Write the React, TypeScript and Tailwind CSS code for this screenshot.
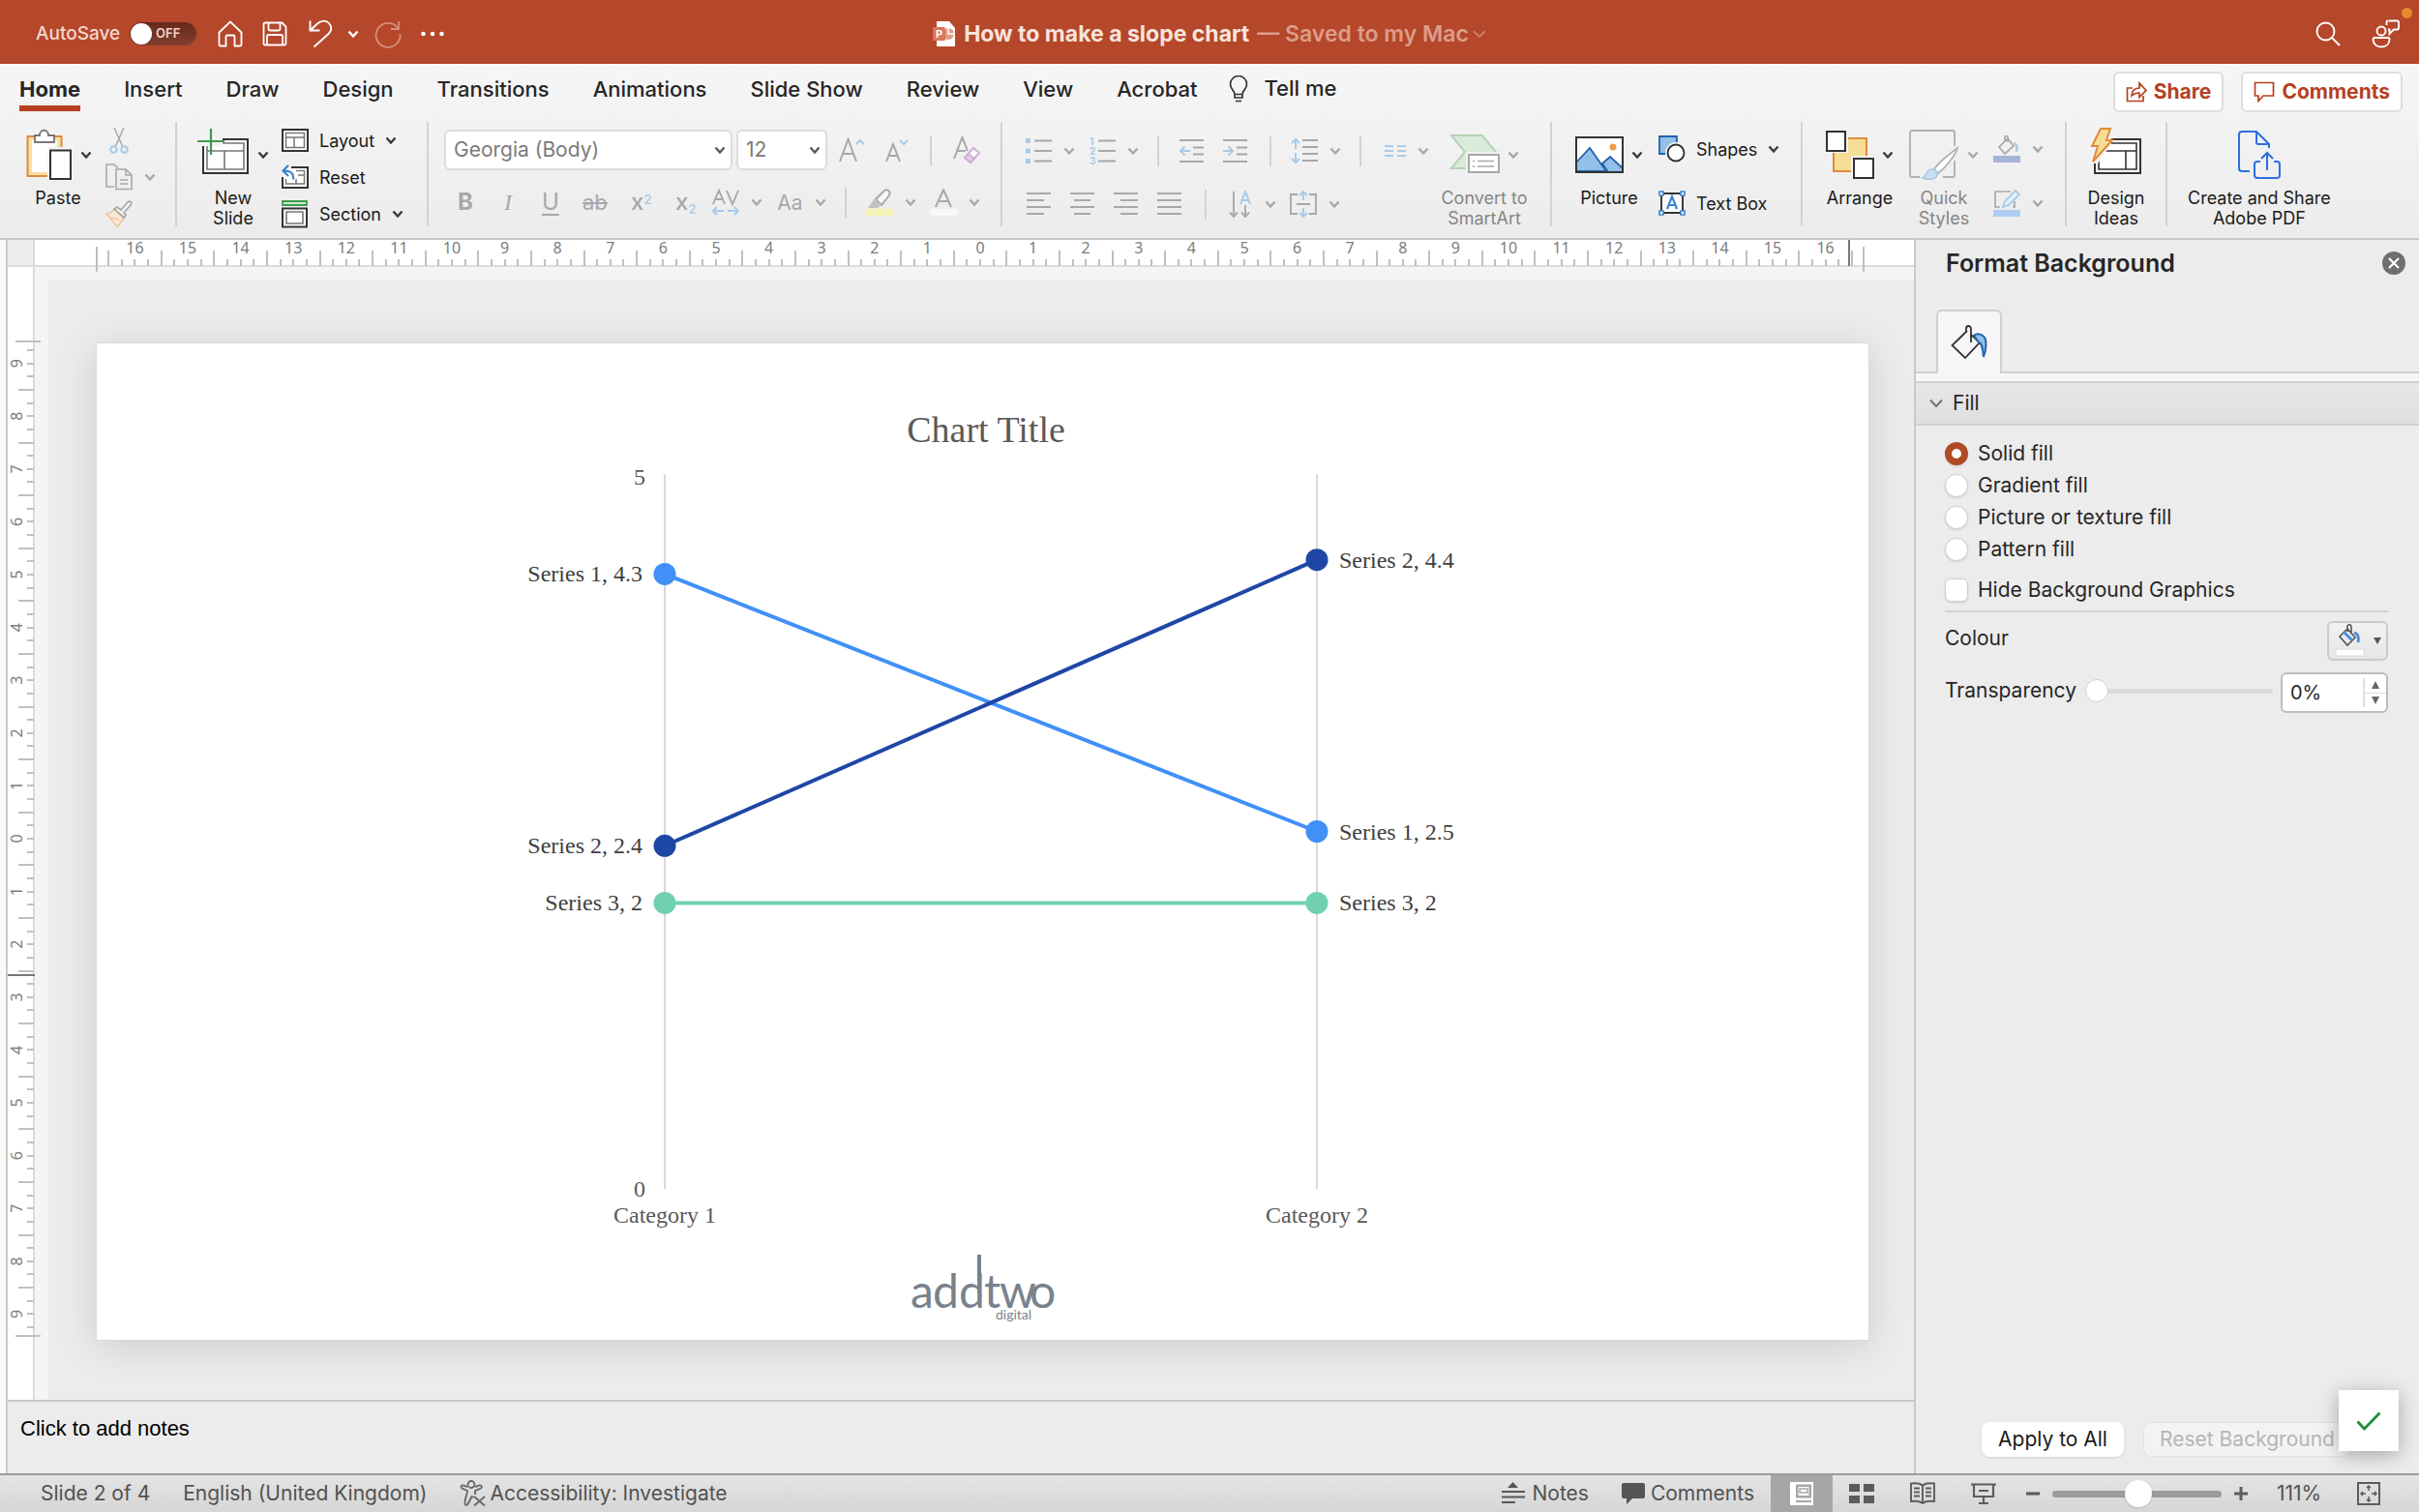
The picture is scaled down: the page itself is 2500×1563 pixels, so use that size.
import React, { useState } from 'react';
import clsx from 'clsx';

type ChildrenProps = { children?: React.ReactNode };

type IconProps = ChildrenProps & {
  w: number;
  h: number;
  className?: string;
};

const GREY = '#a8a8a8';
const SOFT_BLUE = '#a9cbe8';
const DARK = '#3b3b3b';

const Icon: React.FC<IconProps> = ({ w, h, className, children }) => (
  <svg
    width={w}
    height={h}
    viewBox={`0 0 ${w} ${h}`}
    fill="none"
    className={clsx('shrink-0', className)}
    aria-hidden="true"
  >
    {children}
  </svg>
);

const Chevron = ({ color = DARK }: { color?: string }) => (
  <Icon w={12} h={8}>
    <path d="M1.5 1.5 6 6.5l4.5-5" stroke={color} strokeWidth="2.4" />
  </Icon>
);

/* ---------- title bar ---------- */

const TitleBar = () => {
  const [autoSave, setAutoSave] = useState(false);

  return (
    <header className="grid h-[66px] grid-cols-[1fr_auto_1fr] items-center bg-[#b5472a] pt-1 text-white">
      <div className="flex items-center pl-[37px]">
        <label
          htmlFor="autosave"
          className="w-[97px] text-[19px] font-medium text-[#f3d8cf]"
        >
          AutoSave
        </label>
        <button
          id="autosave"
          role="switch"
          aria-checked={autoSave}
          onClick={() => setAutoSave(!autoSave)}
          className="flex h-6 w-[69px] items-center gap-1 rounded-full bg-gradient-to-b from-[#66291b] to-[#83402f] px-px text-[13px] font-semibold text-[#f0d6ce]"
        >
          <span className="size-[22px] rounded-full bg-white" />
          {autoSave ? 'ON' : 'OFF'}
        </button>
        <button aria-label="Home" className="ml-[22px]">
          <Icon w={26} h={28}>
            <path
              d="M1.5 12.5 13 1.5l11.500 11V25a1.500 1.500 0 0 1-1.500 1.500h-5.500V17a1.500 1.500 0 0 0-1.500-1.500h-6A1.500 1.500 0 0 0 8.500 17v9.500H3A1.500 1.500 0 0 1 1.500 25z"
              stroke="#fff"
              strokeWidth="1.800"
            />
          </Icon>
        </button>
        <button aria-label="Save" className="ml-5">
          <Icon w={26} h={26}>
            <path
              d="M3 1.500h17.500l4 4V23a1.500 1.500 0 0 1-1.500 1.500H3A1.500 1.500 0 0 1 1.500 23V3A1.500 1.500 0 0 1 3 1.500zM6.500 1.500V8A1.500 1.500 0 0 0 8 9.500h9A1.500 1.500 0 0 0 18.500 8V1.500M5 24.500v-9A1.500 1.500 0 0 1 6.500 14h13a1.500 1.500 0 0 1 1.500 1.500v9"
              stroke="#fff"
              strokeWidth="1.800"
            />
          </Icon>
        </button>
        <button aria-label="Undo" className="ml-[22px] flex items-center gap-[15px]">
          <Icon w={25} h={30}>
            <path
              d="M1.500 1.500v10h10M1.500 11.500 9 4.500c4-3.600 9-4 12-.500 3.500 4 2.500 8-.500 11L5.500 28.500"
              stroke="#fff"
              strokeWidth="1.900"
            />
          </Icon>
          <Chevron color="#fff" />
        </button>
        <button aria-label="Redo" className="ml-[15px]">
          <Icon w={30} h={30}>
            <path
              d="M26 2v8h-8M25.500 9.500A12.500 12.500 0 1 0 27.500 15"
              stroke="#d68f7b"
              strokeWidth="1.800"
            />
          </Icon>
        </button>
        <button aria-label="More" className="ml-[19px]">
          <Icon w={24} h={6}>
            <circle cx="2.500" cy="3" r="2.300" fill="#fff" />
            <circle cx="12" cy="3" r="2.300" fill="#fff" />
            <circle cx="21.500" cy="3" r="2.300" fill="#fff" />
          </Icon>
        </button>
      </div>

      <h1 className="flex items-center text-[23px] font-bold text-[#f8e3dc]">
        <Icon w={24} h={26} className="mr-2">
          <path d="M4 0h13l6 7v19H4z" fill="#fff" />
          <circle cx="16" cy="13" r="6" fill="#e39a86" />
          <path d="M16 6v7h7" stroke="#fff" strokeWidth="1.500" />
          <rect y="6" width="13" height="14" rx="1.500" fill="#d8775c" />
          <text x="3" y="17" fontSize="11" fontWeight="700" fill="#fff">
            P
          </text>
        </Icon>
        How to make a slope chart
        <span className="ml-2 mr-1 font-semibold text-[#dd9c89]">
          — Saved to my Mac
        </span>
        <Icon w={14} h={9}>
          <path d="m1 1 6 6 6-6" stroke="#cf8069" strokeWidth="1.800" />
        </Icon>
      </h1>

      <div className="flex items-center justify-end gap-8 pr-[19px]">
        <button aria-label="Search">
          <Icon w={26} h={26}>
            <circle cx="10.500" cy="10.500" r="9" stroke="#fff" strokeWidth="1.900" />
            <path d="m17 17 8 8" stroke="#fff" strokeWidth="1.900" />
          </Icon>
        </button>
        <button aria-label="Presence" className="relative">
          <Icon w={30} h={30}>
            <circle cx="10" cy="12" r="4.500" stroke="#fff" strokeWidth="1.900" />
            <path
              d="M3 19h14a1.500 1.500 0 0 1 1.500 1.500c0 5-3.500 8-8.500 8s-8.500-3-8.500-8A1.500 1.500 0 0 1 3 19zM17.500 1.500h9A1.500 1.500 0 0 1 28 3v6a1.500 1.500 0 0 1-1.500 1.500H23L18.500 15v-4.500H17M15.500 6V3a1.500 1.500 0 0 1 1.500-1.500"
              stroke="#fff"
              strokeWidth="1.900"
            />
          </Icon>
          <span className="absolute -right-3 -top-3 size-[11px] rounded-full bg-[#e8892f]" />
        </button>
      </div>
    </header>
  );
};

/* ---------- ribbon tabs ---------- */

const tabs = [
  'Home',
  'Insert',
  'Draw',
  'Design',
  'Transitions',
  'Animations',
  'Slide Show',
  'Review',
  'View',
  'Acrobat',
];

const TabRow = () => {
  const [active, setActive] = useState('Home');

  return (
    <div className="flex h-[60px] items-start justify-between pl-5 pr-[17px]">
      <nav className="flex items-center gap-[45px] pt-2 text-[22px] font-medium text-[#262626]">
        {tabs.map((tab) => (
          <button
            key={tab}
            onClick={() => setActive(tab)}
            className={clsx(
              'h-[41px] border-b-[6px] leading-8',
              tab === active
                ? 'border-[#b5411f] font-bold'
                : 'border-transparent'
            )}
          >
            {tab}
          </button>
        ))}
        <button className="-ml-3 flex h-[41px] items-center gap-4 border-b-[6px] border-transparent">
          <Icon w={20} h={28}>
            <path
              d="M6 19.500c0-4-4.500-5-4.500-10.500a8.500 8.500 0 0 1 17 0c0 5.500-4.500 6.500-4.500 10.500zM6 19.500v3.500h8v-3.500M7 26.500h6"
              stroke="#333"
              strokeWidth="1.700"
            />
          </Icon>
          Tell me
        </button>
      </nav>
      <div className="flex gap-[18px] pt-2 text-[21px] font-bold text-[#b5411f]">
        <button className="flex h-[42px] items-center gap-[7px] rounded-md border-2 border-[#dedede] bg-white px-[11px]">
          <Icon w={22} h={22}>
            <path
              d="M7 7H1.500v13.500H18V15M6 15c0-5 3-8 8-8V2l7 7.500-7 7V12c-4 0-6 1-8 3z"
              stroke="#b5411f"
              strokeWidth="1.700"
            />
          </Icon>
          Share
        </button>
        <button className="flex h-[42px] items-center gap-[7px] rounded-md border-2 border-[#dedede] bg-white px-[11px]">
          <Icon w={22} h={22}>
            <path
              d="M1.500 1.500h19V15H10l-5 5.500V15H1.500z"
              stroke="#b5411f"
              strokeWidth="1.700"
            />
          </Icon>
          Comments
        </button>
      </div>
    </div>
  );
};

/* ---------- ribbon tools ---------- */

const Group: React.FC<ChildrenProps & { className?: string }> = ({
  className,
  children,
}) => (
  <div
    className={clsx(
      'flex h-[108px] shrink-0 items-start border-r-2 border-[#d2d2d2]',
      className
    )}
  >
    {children}
  </div>
);

type BigButtonProps = {
  icon: React.ReactNode;
  label: React.ReactNode;
  chevron?: boolean;
  disabled?: boolean;
  className?: string;
};

const BigButton: React.FC<BigButtonProps> = ({
  icon,
  label,
  chevron,
  disabled,
  className,
}) => (
  <button
    disabled={disabled}
    className={clsx(
      'flex shrink-0 flex-col items-center text-center text-[18px] leading-[21px]',
      disabled ? 'text-[#858585]' : 'text-[#1a1a1a]',
      className
    )}
  >
    <span className="flex h-[68px] items-center gap-2">
      {icon}
      {chevron && <Chevron color={disabled ? GREY : DARK} />}
    </span>
    {label}
  </button>
);

type ToolProps = ChildrenProps & {
  label: string;
  chevron?: boolean;
  width?: string;
};

const Tool: React.FC<ToolProps> = ({ label, chevron, width, children }) => (
  <button
    aria-label={label}
    disabled
    className={clsx('flex h-8 shrink-0 items-center gap-3', width)}
  >
    {children}
    {chevron && <Chevron color={GREY} />}
  </button>
);

const Divider = () => <span className="h-[31px] w-[2px] shrink-0 bg-[#d2d2d2]" />;

const Lines = ({ rows }: { rows: [number, number][] }) => (
  <Icon w={26} h={26}>
    {rows.map(([from, to], i) => (
      <path
        key={i}
        d={`M${from} ${2 + i * 7}H${to}`}
        stroke={GREY}
        strokeWidth="2"
      />
    ))}
  </Icon>
);

const ClipboardGroup = () => (
  <Group className="w-[183px] pl-[23px]">
    <BigButton
      chevron
      label="Paste"
      className="w-[74px]"
      icon={
        <Icon w={50} h={54}>
          <path d="M3.500 8h35v41h-35z" fill="#f8e0a0" stroke="#e08a3c" strokeWidth="2" />
          <path d="M8 12h26v33H8z" fill="#fff" />
          <path
            d="M11 14V7h5c0-7 9-7 9 0h6v7z"
            fill="#fff"
            stroke="#777"
            strokeWidth="1.800"
          />
          <path d="M24 19h27v35H24z" fill="#f3f3f3" />
          <path d="M27 22.500h21V52H27z" fill="#fff" stroke="#333" strokeWidth="2" />
        </Icon>
      }
    />
    <div className="grid auto-rows-[38px] items-center pl-3">
      <Tool label="Cut">
        <Icon w={28} h={28}>
          <path d="m9 1 9 20M19 1l-9 20" stroke={GREY} strokeWidth="1.500" />
          <circle cx="8.500" cy="23.500" r="3.300" stroke={SOFT_BLUE} strokeWidth="2" />
          <circle cx="19.500" cy="23.500" r="3.300" stroke={SOFT_BLUE} strokeWidth="2" />
        </Icon>
      </Tool>
      <Tool label="Copy" chevron>
        <Icon w={28} h={28}>
          <path
            d="M9 24H1V1h8l4 4M11 6h10l6 6v14.500H11zM21 6v6h6M15 17h8M15 21h8"
            stroke={GREY}
            strokeWidth="1.600"
          />
        </Icon>
      </Tool>
      <Tool label="Format painter">
        <Icon w={28} h={28}>
          <path d="M1 14c3 0 6-2 8-5l10 9c-2 4-4 7-7 9.500z" fill="#f8e9d6" />
          <path
            d="M1 14c3 0 6-2 8-5l10 9c-2 4-4 7-7 9.500zM5 18l9 2"
            stroke="#edc7a3"
            strokeWidth="1.700"
          />
          <path
            d="m9 9 3-2 4 3 7-8c2-2 5 0 3 3l-7 8 2 2-2 3z"
            fill="#f3f3f3"
            stroke={GREY}
            strokeWidth="1.700"
          />
        </Icon>
      </Tool>
    </div>
  </Group>
);

const SlideFrame = () => (
  <>
    <path d="M1 1h26v22H1z" fill="#fff" stroke="#333" strokeWidth="2" />
    <path d="M4.500 4.500h19v15h-19zM4.500 9h19M13 9v10.500" stroke="#777" strokeWidth="1.500" />
  </>
);

const SlidesGroup = () => (
  <Group className="w-[260px] pl-[18px]">
    <BigButton
      chevron
      label={
        <>
          New
          <br />
          Slide
        </>
      }
      className="w-[80px]"
      icon={
        <Icon w={54} h={58}>
          <path d="M6 13h46v35H6z" fill="#fff" stroke="#333" strokeWidth="2" />
          <path
            d="M10 17h38v27H10zM10 25h38M28 25v19"
            stroke="#777"
            strokeWidth="1.600"
          />
          <path d="M0 9h26v11H0z" fill="#f3f3f3" />
          <path d="M14 2v27M0 15h28" stroke="#3d9b4e" strokeWidth="2.200" />
        </Icon>
      }
    />
    <div className="grid auto-rows-[38px] pl-[10px] text-[18px] text-[#1a1a1a]">
      <button className="flex items-center gap-[11px]">
        <Icon w={28} h={24}>
          <SlideFrame />
        </Icon>
        Layout
        <Chevron />
      </button>
      <button className="flex items-center gap-[11px]">
        <Icon w={28} h={26}>
          <path d="M10 3h17v21H1V13" fill="#fff" stroke="#333" strokeWidth="2" />
          <path d="M15 6.500h8.500V20h-19v-5M17 11h6M15 15v5" stroke="#777" strokeWidth="1.500" />
          <path
            d="M7 1 1.500 6.500 7 12M2 6.500c7 0 11 2 10 9"
            stroke="#3c86cf"
            strokeWidth="2.200"
          />
        </Icon>
        Reset
      </button>
      <button className="flex items-center gap-[11px]">
        <Icon w={28} h={30}>
          <path d="M1 2h25v4H1z" fill="#cfe9cd" stroke="#3d9b4e" strokeWidth="1.800" />
          <path d="M1 9.500h25v19H1z" fill="#fff" stroke="#333" strokeWidth="2" />
          <path d="M5 13h17v12H5z" stroke="#777" strokeWidth="1.600" />
        </Icon>
        Section
        <Chevron />
      </button>
    </div>
  </Group>
);

type FontSelectProps = {
  id: string;
  label: string;
  value: string;
  className: string;
};

const FontSelect: React.FC<FontSelectProps> = ({ id, label, value, className }) => (
  <div className={clsx('relative', className)}>
    <label htmlFor={id} className="sr-only">
      {label}
    </label>
    <select
      id={id}
      disabled
      className="h-[42px] w-full appearance-none rounded-md border-2 border-[#dcdcdc] bg-white pl-2 text-[21px] leading-8 text-[#7b7b7b] opacity-100"
    >
      <option>{value}</option>
    </select>
    <span className="pointer-events-none absolute inset-y-0 right-[7px] flex items-center">
      <Chevron color="#5a5a5a" />
    </span>
  </div>
);

const FontGroup = () => (
  <Group className="w-[593px] flex-col pl-4">
    <div className="flex h-[60px] items-center">
      <FontSelect
        id="font-family"
        label="Font"
        value="Georgia (Body)"
        className="w-[298px]"
      />
      <FontSelect
        id="font-size"
        label="Font size"
        value="12"
        className="ml-1 w-[94px]"
      />
      <div className="flex items-center gap-[22px] pl-3">
        <Tool label="Increase font size">
          <Icon w={26} h={26}>
            <path d="m1 25 8.500-23L18 25M4 17h11" stroke={GREY} strokeWidth="2" />
            <path d="m18 7 4-4 4 4" stroke={SOFT_BLUE} strokeWidth="2" />
          </Icon>
        </Tool>
        <Tool label="Decrease font size">
          <Icon w={24} h={26}>
            <path d="m1 25 7-18 7 18M3.500 19h9" stroke={GREY} strokeWidth="2" />
            <path d="m15 3 4 4 4-4" stroke={SOFT_BLUE} strokeWidth="2" />
          </Icon>
        </Tool>
        <Divider />
        <Tool label="Clear formatting">
          <Icon w={28} h={30}>
            <path d="m1 24 8.500-22L15 16M4 16h9" stroke={GREY} strokeWidth="2" />
            <path d="m12 23 9-10 6 5-9 10z" fill="#fff" stroke="#d2aed8" strokeWidth="2" />
            <path d="m12 23 4-4 6 5-4 4z" fill="#e5cfe9" stroke="#d2aed8" strokeWidth="2" />
          </Icon>
        </Tool>
      </div>
    </div>
    <div className="flex h-[50px] items-center pl-[14px] text-[24px] leading-none text-[#a8a8a8]">
      <Tool label="Bold" width="w-[44px]">
        <b>B</b>
      </Tool>
      <Tool label="Italic" width="w-[43px]">
        <i className="pl-1 font-['Liberation_Serif',serif]">I</i>
      </Tool>
      <Tool label="Underline" width="w-[42px]">
        <span className="underline underline-offset-4">U</span>
      </Tool>
      <Tool label="Strikethrough" width="w-[50px]">
        <span className="text-[22px] line-through">ab</span>
      </Tool>
      <Tool label="Superscript" width="w-[46px]">
        <span className="font-medium">
          x<sup className="text-[13px] text-[#a9cbe8]">2</sup>
        </span>
      </Tool>
      <Tool label="Subscript" width="w-[38px]">
        <span className="font-medium">
          x<sub className="text-[13px] text-[#a9cbe8]">2</sub>
        </span>
      </Tool>
      <Tool label="Character spacing" chevron width="w-[67px]">
        <Icon w={28} h={28}>
          <path d="m1 16 6-14 6 14M3 11h8M15 2l6 14 6-14" stroke={GREY} strokeWidth="1.900" />
          <path
            d="M1 23h11M5 19l-4 4 4 4M16 23h11M23 19l4 4-4 4"
            stroke={SOFT_BLUE}
            strokeWidth="2"
          />
        </Icon>
      </Tool>
      <Tool label="Change case" chevron width="w-[70px]">
        <span className="w-[27px] text-[21px]">Aa</span>
      </Tool>
      <Divider />
      <Tool label="Highlight" chevron width="ml-5 w-[66px]">
        <Icon w={28} h={28}>
          <path d="M0 21h28v7H0z" fill="#f6f3b4" />
          <path
            d="m10 11 9-9c3-2 7 1 5 5l-8 10z"
            fill="#f6f6f6"
            stroke={GREY}
            strokeWidth="2"
          />
          <path d="m9 10 7 7-4 3H2z" fill="#c2c2c2" />
        </Icon>
      </Tool>
      <Tool label="Font colour" chevron>
        <Icon w={28} h={28}>
          <path d="m6 19 8-18 8 18M9 13h10" stroke={GREY} strokeWidth="2" />
          <path d="M0 21h28v7H0z" fill="#f8f8f8" />
        </Icon>
      </Tool>
    </div>
  </Group>
);

const ParagraphGroup = () => (
  <Group className="w-[568px]">
    <div className="flex w-[442px] shrink-0 flex-col pl-6">
      <div className="flex h-[60px] items-center">
        <Tool label="Bullets" chevron width="w-[66px]">
          <Icon w={27} h={26}>
            <path d="M0 0h5v5H0zM0 10.500h5v5H0zM0 21h5v5H0z" fill={SOFT_BLUE} />
            <path d="M9 2.500h18M9 13h18M9 23.500h18" stroke={GREY} strokeWidth="2" />
          </Icon>
        </Tool>
        <Tool label="Numbering" chevron width="w-[70px]">
          <Icon w={27} h={30}>
            <g fill={SOFT_BLUE} fontSize="10" fontWeight="700">
              <text y="9">1</text>
              <text y="19">2</text>
              <text y="29">3</text>
            </g>
            <path d="M9 4.500h18M9 15h18M9 25.500h18" stroke={GREY} strokeWidth="2" />
          </Icon>
        </Tool>
        <Divider />
        <Tool label="Decrease indent" width="ml-[21px] w-[45px]">
          <Icon w={26} h={26}>
            <path d="M0 2h25M14 9.500h11M14 16.500h11M0 24h25" stroke={GREY} strokeWidth="2" />
            <path d="M1 13h10M5.500 8.500 1 13l4.500 4.500" stroke={SOFT_BLUE} strokeWidth="2" />
          </Icon>
        </Tool>
        <Tool label="Increase indent" width="w-[48px]">
          <Icon w={26} h={26}>
            <path d="M0 2h25M14 9.500h11M14 16.500h11M0 24h25" stroke={GREY} strokeWidth="2" />
            <path d="M0 13h10M5.500 8.500 10 13l-4.500 4.500" stroke={SOFT_BLUE} strokeWidth="2" />
          </Icon>
        </Tool>
        <Divider />
        <Tool label="Line spacing" chevron width="ml-5 w-[71px]">
          <Icon w={28} h={28}>
            <path d="M12 3h16M12 10h16M12 17h16M12 24h16" stroke={GREY} strokeWidth="2" />
            <path
              d="M5 2v10M1 6l4-4 4 4M5 16v10M1 22l4 4 4-4"
              stroke={SOFT_BLUE}
              strokeWidth="2"
            />
          </Icon>
        </Tool>
        <Divider />
        <Tool label="Columns" chevron width="ml-6">
          <Icon w={22} h={14}>
            <path
              d="M0 2h9M0 7h9M0 12h9M13 2h9M13 7h9M13 12h9"
              stroke={SOFT_BLUE}
              strokeWidth="2"
            />
          </Icon>
        </Tool>
      </div>
      <div className="flex h-[50px] items-center">
        <Tool label="Align left" width="w-[46px]">
          <Lines rows={[[1, 26], [1, 19], [1, 26], [1, 19]]} />
        </Tool>
        <Tool label="Align centre" width="w-[45px]">
          <Lines rows={[[0, 25], [4, 21], [0, 25], [4, 21]]} />
        </Tool>
        <Tool label="Align right" width="w-[45px]">
          <Lines rows={[[0, 25], [7, 25], [0, 25], [7, 25]]} />
        </Tool>
        <Tool label="Justify" width="w-[49px]">
          <Lines rows={[[0, 25], [0, 25], [0, 25], [0, 25]]} />
        </Tool>
        <Divider />
        <Tool label="Text direction" chevron width="ml-[22px] w-[64px]">
          <Icon w={26} h={28}>
            <path
              d="M6 1v26M2 22.500l4 4.500 4-4.500M18 15v12M14 22.500l4 4.500 4-4.500"
              stroke={GREY}
              strokeWidth="1.900"
            />
            <path d="m13 14 5-13 5 13M15 10h6" stroke={SOFT_BLUE} strokeWidth="1.900" />
          </Icon>
        </Tool>
        <Tool label="Align text" chevron>
          <Icon w={28} h={28}>
            <path d="M8 4H1v20h7M20 4h7v20h-7M7 14h14" stroke={GREY} strokeWidth="1.900" />
            <path
              d="M14 1v9M10 5l4-4 4 4M14 18v9M10 23l4 4 4-4"
              stroke={SOFT_BLUE}
              strokeWidth="2"
            />
          </Icon>
        </Tool>
      </div>
    </div>
    <BigButton
      chevron
      disabled
      className="w-[112px]"
      label={
        <>
          Convert to
          <br />
          SmartArt
        </>
      }
      icon={
        <Icon w={52} h={46}>
          <path d="M2 3h32l14 17-14 17H2l14-17z" fill="#d9ecd9" stroke="#b4d3b5" strokeWidth="2" />
          <path d="M17 20h36v24H17z" fill="#f2f2f2" />
          <path d="M20 23h31v18H20z" fill="#fff" stroke={GREY} strokeWidth="2" />
          <path d="M29 29.500h17M29 35h17M24 29.500h2M24 35h2" stroke={GREY} strokeWidth="1.600" />
        </Icon>
      }
    />
  </Group>
);

const InsertGroup = () => (
  <Group className="w-[259px] pl-5">
    <BigButton
      chevron
      label="Picture"
      className="w-[78px]"
      icon={
        <Icon w={50} h={38}>
          <path d="M1 1h48v36H1z" fill="#fff" />
          <path
            d="M1 27 15 12l17 24H1zM28 28l8-7 13 12v4H34z"
            fill="#93bfe8"
            stroke="#2464ad"
            strokeWidth="1.800"
          />
          <circle cx="39" cy="11" r="3.500" fill="#ee9b49" />
          <path d="M1 1h48v36H1z" stroke="#333" strokeWidth="2" />
        </Icon>
      }
    />
    <div className="grid auto-rows-[56px] pl-[12px] text-[18px] text-[#1a1a1a]">
      <button className="flex items-center gap-[11px]">
        <Icon w={28} h={28}>
          <path d="M1 1h18v18H1z" fill="#93bfe8" stroke="#2464ad" strokeWidth="1.800" />
          <circle cx="18" cy="18" r="11" fill="#f3f3f3" />
          <circle cx="18" cy="18" r="8.500" fill="#fff" stroke="#333" strokeWidth="1.900" />
        </Icon>
        Shapes
        <Chevron />
      </button>
      <button className="flex items-center gap-[11px]">
        <Icon w={28} h={26}>
          <path d="M3 3h22v20H3z" fill="#fff" stroke="#333" strokeWidth="1.900" />
          <path d="m9 19 5-13 5 13M11 15h6" stroke="#3c86cf" strokeWidth="2.200" />
          <path
            d="M1 1h4v4H1zM23 1h4v4h-4zM1 21h4v4H1zM23 21h4v4h-4z"
            fill="#fff"
            stroke="#3c86cf"
            strokeWidth="1.600"
          />
        </Icon>
        Text Box
      </button>
    </div>
  </Group>
);

const Bucket = ({ bar }: { bar: string }) => (
  <Icon w={28} h={28}>
    <path d="M6 12 15 3l6 8-9 8zM15 7V2.500c0-3-3-3-3 0v4" stroke={GREY} strokeWidth="1.700" />
    <path d="M21 8c4 1 4 5 3 9" stroke={SOFT_BLUE} strokeWidth="2.500" />
    <path d="M0 21h28v7H0z" fill={bar} />
  </Icon>
);

const ArrangeGroup = () => (
  <Group className="w-[273px] pl-5">
    <BigButton
      chevron
      label="Arrange"
      className="w-[78px]"
      icon={
        <Icon w={50} h={50}>
          <path d="M8 8h34v34H8z" fill="#f5dd96" stroke="#e08a3c" strokeWidth="2" />
          <path d="M0 0h23v23H0zM26 26h24v24H26z" fill="#f3f3f3" />
          <path
            d="M1 1h19v20H1zM29 29h20v20H29z"
            fill="#fff"
            stroke="#333"
            strokeWidth="2"
          />
        </Icon>
      }
    />
    <BigButton
      chevron
      disabled
      label={
        <>
          Quick
          <br />
          Styles
        </>
      }
      className="ml-[8px] w-[80px]"
      icon={
        <Icon w={52} h={52}>
          <path
            d="M11 49H3a2 2 0 0 1-2-2V3a2 2 0 0 1 2-2h42a2 2 0 0 1 2 2v14M47 32v15a2 2 0 0 1-2 2H35"
            stroke="#b0b0b0"
            strokeWidth="1.900"
          />
          <path
            d="M50 19C42 25 29 36 26 41l4 4c7-5 17-17 20-26z"
            fill="#fff"
            stroke="#b0b0b0"
            strokeWidth="1.700"
          />
          <path
            d="M14 50c4-1 3-9 9-9 5 0 8 4 5 8-3 3-9 3-14 1z"
            fill="#cadff1"
            stroke={SOFT_BLUE}
            strokeWidth="1.700"
          />
        </Icon>
      }
    />
    <div className="grid auto-rows-[56px] items-center pl-[11px]">
      <Tool label="Shape fill" chevron>
        <Bucket bar="#a6b3d9" />
      </Tool>
      <Tool label="Shape outline" chevron>
        <Icon w={28} h={28}>
          <path d="M18 2H2v16h5M22 12v6h-2" stroke={GREY} strokeWidth="1.700" />
          <path
            d="m10 18 2-6L23 1l4 4-11 11z"
            fill="#e3eef8"
            stroke={SOFT_BLUE}
            strokeWidth="1.800"
          />
          <path d="M0 21h28v7H0z" fill="#b0cdf3" />
        </Icon>
      </Tool>
    </div>
  </Group>
);

const Ribbon = () => (
  <section className="border-b-2 border-[#c6c6c6] bg-gradient-to-b from-[#f6f6f6] to-[#ececec]">
    <TabRow />
    <div className="flex overflow-hidden pb-[10px]">
      <ClipboardGroup />
      <SlidesGroup />
      <FontGroup />
      <ParagraphGroup />
      <InsertGroup />
      <ArrangeGroup />
      <Group className="w-[104px] justify-center">
        <BigButton
          label={
            <>
              Design
              <br />
              Ideas
            </>
          }
          icon={
            <Icon w={54} h={58}>
              <path d="M5 13h47v35H5z" fill="#fff" stroke="#333" strokeWidth="2" />
              <path d="M9 17h39v27H9zM9 25h39M37 25v19" stroke="#333" strokeWidth="1.600" />
              <path d="M0 4h22v14L8 38H0z" fill="#f3f3f3" />
              <path
                d="M11 2h10l-4 12h6L3 36l5-16H2z"
                fill="#f5dd96"
                stroke="#e08a3c"
                strokeWidth="2"
              />
            </Icon>
          }
        />
      </Group>
      <BigButton
        className="ml-[21px]"
        label={
          <>
            Create and Share
            <br />
            Adobe PDF
          </>
        }
        icon={
          <Icon w={44} h={50}>
            <path
              d="M12 42H4a3 3 0 0 1-3-3V4a3 3 0 0 1 3-3h15l13 13v4M19 1v11a2 2 0 0 0 2 2h11"
              stroke="#2f6fe0"
              strokeWidth="2"
            />
            <path
              d="M23 32h-3a3 3 0 0 0-3 3v11a3 3 0 0 0 3 3h20a3 3 0 0 0 3-3V35a3 3 0 0 0-3-3h-3M30 41V24M24 29l6-6 6 6"
              stroke="#2f6fe0"
              strokeWidth="2"
            />
          </Icon>
        }
      />
    </div>
  </section>
);

/* ---------- rulers ---------- */

const UNIT = 54.6;
const range = (from: number, to: number) =>
  Array.from({ length: to - from + 1 }, (_, i) => from + i);

const HorizontalRuler = () => {
  const zero = 977;
  const quarters = range(-66, 66);

  return (
    <svg
      width="100%"
      height="42"
      className="block overflow-visible"
      aria-hidden="true"
    >
      <rect width="100%" height="26" fill="#fff" />
      <rect y="26" width="100%" height="2" fill="#dcdcdc" />
      <rect y="28" width="100%" height="14" fill="#f5f5f5" />
      {quarters.map((q) => (
        <path
          key={q}
          d={`M${Math.round(zero + (q * UNIT) / 4)} ${Math.abs(q) % 4 === 2 ? 11 : 20}V27`}
          stroke="#c0c0c0"
          strokeWidth="2"
        />
      ))}
      <path d="M64 7v26M1890 7v26" stroke="#c0c0c0" strokeWidth="2" />
      <path d="M1875 0v27" stroke="#777" strokeWidth="2" />
      <g
        fill="#7d7d7d"
        fontSize="16"
        textAnchor="middle"
        fontFamily="Noto Sans, sans-serif"
      >
        {range(-16, 16).map((n) => (
          <text key={n} x={zero + n * UNIT} y="14">
            {Math.abs(n)}
          </text>
        ))}
      </g>
    </svg>
  );
};

const VerticalRuler = () => {
  const zero = 591;
  const quarters = range(-37, 37);

  return (
    <svg
      width="42"
      height="100%"
      className="block h-full overflow-visible"
      aria-hidden="true"
    >
      <rect width="26" height="100%" fill="#fff" />
      <rect x="26" width="2" height="100%" fill="#dcdcdc" />
      <rect x="28" width="14" height="100%" fill="#f5f5f5" />
      {quarters.map((q) => (
        <path
          key={q}
          d={`M${Math.abs(q) % 4 === 2 ? 11 : 20} ${Math.round(zero + (q * UNIT) / 4)}H27`}
          stroke="#c0c0c0"
          strokeWidth="2"
        />
      ))}
      <path d="M8 77h26M8 1105h26" stroke="#c0c0c0" strokeWidth="2" />
      <path d="M0 732h28" stroke="#777" strokeWidth="2" />
      <g
        fill="#7d7d7d"
        fontSize="16"
        textAnchor="middle"
        fontFamily="Noto Sans, sans-serif"
      >
        {range(-9, 9).map((n) => (
          <text
            key={n}
            transform={`translate(15 ${zero + n * UNIT}) rotate(-90)`}
          >
            {Math.abs(n)}
          </text>
        ))}
      </g>
    </svg>
  );
};

/* ---------- slide ---------- */

const series = [
  { name: 'Series 1', color: '#4090f7', values: [4.3, 2.5] },
  { name: 'Series 2', color: '#1e47a5', values: [2.4, 4.4] },
  { name: 'Series 3', color: '#70d0b0', values: [2, 2] },
];

const LEFT = 587;
const RIGHT = 1261;
const yOf = (value: number) => 874 - value * 147.8;

const Slide = () => (
  <svg
    viewBox="0 0 1831 1030"
    className="block h-auto w-full bg-white shadow-[0_6px_40px_rgba(0,0,0,0.14)] outline outline-[#dadada]"
    fontFamily="Georgia, 'Liberation Serif', serif"
    fontSize="24"
    fill="#404040"
    role="img"
    aria-label="Slope chart"
  >
    <text x="919" y="102" fontSize="38" textAnchor="middle" fill="#595959">
      Chart Title
    </text>
    <path d={`M${LEFT} 135V874M${RIGHT} 135V874`} stroke="#d9d9d9" strokeWidth="2" />
    <text x="567" y="146" textAnchor="end" fill="#595959">
      5
    </text>
    <text x="567" y="882" textAnchor="end" fill="#595959">
      0
    </text>
    {series.map(({ name, color, values: [a, b] }) => (
      <g key={name}>
        <path
          d={`M${LEFT} ${yOf(a)}L${RIGHT} ${yOf(b)}`}
          stroke={color}
          strokeWidth="4"
        />
        <circle cx={LEFT} cy={yOf(a)} r="11.500" fill={color} />
        <circle cx={RIGHT} cy={yOf(b)} r="11.500" fill={color} />
        <text x="564" y={yOf(a) + 8} textAnchor="end">
          {`${name}, ${a}`}
        </text>
        <text x="1284" y={yOf(b) + 8}>
          {`${name}, ${b}`}
        </text>
      </g>
    ))}
    <text x={LEFT} y="909" textAnchor="middle" fill="#595959">
      Category 1
    </text>
    <text x={RIGHT} y="909" textAnchor="middle" fill="#595959">
      Category 2
    </text>
    <g fill="#78828c" fontFamily="Lato, sans-serif">
      <text x="841 864 891 917 933 964" y="997" fontSize="48">
        addtwo
      </text>
      <path d="M910 942h4v40h-4z" />
      <text x="929" y="1009" fontSize="14">
        digital
      </text>
    </g>
  </svg>
);

/* ---------- format panel ---------- */

const fills = ['Solid fill', 'Gradient fill', 'Picture or texture fill', 'Pattern fill'];

const FormatPanel = () => {
  const [fill, setFill] = useState(fills[0]);
  const [transparency, setTransparency] = useState(0);

  return (
    <aside className="relative flex w-[522px] shrink-0 flex-col border-l-2 border-[#c9c9c9] bg-[#ececec] text-[21px] text-[#262626]">
      <div className="flex h-[72px] items-start justify-between pl-[31px] pr-[14px] pt-2">
        <h2 className="text-[25px] font-semibold leading-8">Format Background</h2>
        <button aria-label="Close panel" className="pt-1">
          <Icon w={24} h={24}>
            <circle cx="12" cy="12" r="12" fill="#6f6f6f" />
            <path d="m7 7 10 10M17 7 7 17" stroke="#fff" strokeWidth="2.200" />
          </Icon>
        </button>
      </div>
      <div className="border-b-2 border-[#cfcfcf] pl-[21px]">
        <button
          aria-label="Fill options"
          className="-mb-[2px] flex h-[66px] w-[68px] items-center justify-center rounded-t-md border-2 border-b-0 border-[#cfcfcf] bg-[#f6f6f6]"
        >
          <Icon w={38} h={36}>
            <path
              d="M17 6 1.500 21 15 34l15-16-9-8M21 18V4c0-4-5-4-5 0v3"
              stroke="#333"
              strokeWidth="1.800"
            />
            <path
              d="M24 11c3-3 10-2 12 4 1 6 0 13-2 18-1-8-1-14-5-15z"
              fill="#93bfe8"
              stroke="#2464ad"
              strokeWidth="2"
            />
          </Icon>
        </button>
      </div>
      <div className="h-2 bg-[#f6f6f6]" />
      <button className="flex h-[46px] items-center gap-[10px] border-y-2 border-[#cfcfcf] bg-gradient-to-b from-[#e7e7e7] to-[#dfdfdf] pl-[14px]">
        <Icon w={14} h={10}>
          <path d="m1 1.500 6 6.500 6-6.500" stroke="#777" strokeWidth="2.200" />
        </Icon>
        Fill
      </button>

      <div className="flex flex-col pl-[30px] pr-8 pt-3">
        {fills.map((name) => (
          <label key={name} className="flex h-[33px] items-center gap-[10px]">
            <input
              type="radio"
              name="fill"
              checked={fill === name}
              onChange={() => setFill(name)}
              className="size-6 appearance-none rounded-full border border-[#d0d0d0] bg-white shadow-sm checked:border-[7px] checked:border-[#b04a24]"
            />
            {name}
          </label>
        ))}
        <label className="mt-[6px] flex h-10 items-center gap-[10px]">
          <input
            type="checkbox"
            className="size-6 appearance-none rounded-md border border-[#d0d0d0] bg-white shadow-sm checked:bg-[#b04a24]"
          />
          Hide Background Graphics
        </label>
        <div className="mt-px flex h-[60px] items-center justify-between border-t-2 border-[#d4d4d4]">
          <span id="colour-label" className="pb-1">
            Colour
          </span>
          <button
            aria-labelledby="colour-label"
            className="flex h-[41px] w-[63px] items-center justify-end gap-2 rounded-md border-2 border-[#cacaca] bg-gradient-to-b from-[#f2f2f2] to-[#e6e6e6] pr-1"
          >
            <Icon w={31} h={34}>
              <path d="m5 13 8-8 8 9-8 8zM13 8V3c0-3 4-3 4 0v7" stroke="#555" strokeWidth="1.600" />
              <path d="m9 8 9 9M20 9c4 1 5 5 4 10" stroke="#4a8fdf" strokeWidth="3" />
              <path d="M1 26h29v7H1z" fill="#fff" stroke="#dcdcdc" />
            </Icon>
            <Icon w={10} h={8}>
              <path d="M1 1h8L5 8z" fill="#555" />
            </Icon>
          </button>
        </div>
        <div className="flex items-center">
          <label htmlFor="transparency" className="w-[145px]">
            Transparency
          </label>
          <input
            id="transparency"
            type="range"
            value={transparency}
            onChange={(e) => setTransparency(Number(e.target.value))}
            className="h-6 min-w-0 flex-1 appearance-none bg-transparent [&::-webkit-slider-runnable-track]:h-[5px] [&::-webkit-slider-runnable-track]:rounded-full [&::-webkit-slider-runnable-track]:bg-[#dadada] [&::-webkit-slider-thumb]:-mt-[10px] [&::-webkit-slider-thumb]:size-6 [&::-webkit-slider-thumb]:appearance-none [&::-webkit-slider-thumb]:rounded-full [&::-webkit-slider-thumb]:border [&::-webkit-slider-thumb]:border-[#cfcfcf] [&::-webkit-slider-thumb]:bg-white"
          />
          <div className="ml-2 mt-1 flex h-[42px] w-[111px] rounded-md border-2 border-[#bdbdbd] bg-white">
            <input
              aria-label="Transparency percent"
              value={`${transparency}%`}
              onChange={(e) => setTransparency(parseInt(e.target.value, 10) || 0)}
              className="w-full min-w-0 pl-2 text-[20px]"
            />
            <div className="my-1 flex w-6 shrink-0 flex-col border-l-2 border-[#e0e0e0]">
              <button
                aria-label="Increase"
                onClick={() => setTransparency(Math.min(100, transparency + 1))}
                className="flex flex-1 items-center justify-center border-b border-[#e0e0e0]"
              >
                <Icon w={8} h={8}>
                  <path d="M0 8h8L4 0z" fill="#666" />
                </Icon>
              </button>
              <button
                aria-label="Decrease"
                onClick={() => setTransparency(Math.max(0, transparency - 1))}
                className="flex flex-1 items-center justify-center"
              >
                <Icon w={8} h={8}>
                  <path d="M0 0h8L4 8z" fill="#666" />
                </Icon>
              </button>
            </div>
          </div>
        </div>
      </div>

      <div className="mt-auto flex gap-5 pb-[17px] pl-[68px]">
        <button className="h-9 w-[147px] rounded-lg bg-white text-[#1a1a1a] shadow-sm">
          Apply to All
        </button>
        <button
          disabled
          className="h-9 w-[215px] whitespace-nowrap rounded-lg border border-[#e2e2e2] bg-[#f3f3f3] text-[#b5b5b5]"
        >
          Reset Background
        </button>
      </div>
      <button
        aria-label="Done"
        className="absolute bottom-[23px] right-[21px] flex h-[63px] w-[62px] items-center justify-center bg-white shadow-[0_4px_20px_rgba(0,0,0,0.3)]"
      >
        <Icon w={26} h={20}>
          <path d="m1.500 10.500 7 7.500L24.500 1.500" stroke="#1f8f3d" strokeWidth="2.800" />
        </Icon>
      </button>
    </aside>
  );
};

/* ---------- status bar ---------- */

const StatusBar = () => {
  const [zoom, setZoom] = useState(51);

  return (
    <footer className="flex h-10 shrink-0 items-center justify-between border-t-2 border-[#9c9c9c] bg-gradient-to-b from-[#e4e4e4] to-[#d6d6d6] text-[21px] text-[#525252]">
      <div className="flex items-center gap-[34px] pl-[42px]">
        <span>Slide 2 of 4</span>
        <button>English (United Kingdom)</button>
        <button className="flex items-center gap-1">
          <Icon w={27} h={28}>
            <g stroke="#666" strokeWidth="1.800">
              <circle cx="12" cy="4.500" r="3.500" />
              <path d="M8 7C5 6 2 4 1.500 7c0 2 5 3 6.500 4-.500 6-3 9-2.500 13 1 4 3 1 4-1l3-6 2 1M16 7c3-1 6-3 7 0 0 2-5 3-7 4v4" />
              <path d="m15 17 11 9.500M26 17 15 26.500" />
            </g>
          </Icon>
          Accessibility: Investigate
        </button>
      </div>
      <div className="flex h-full items-center pr-10">
        <button className="flex items-center gap-[7px]">
          <Icon w={24} h={24}>
            <path d="M6 6h11l-5.500-6z" fill="#555" />
            <path d="M0 10h24M0 15.500h24M0 21h14" stroke="#555" strokeWidth="2.200" />
          </Icon>
          Notes
        </button>
        <button className="ml-[34px] flex items-center gap-[6px]">
          <Icon w={24} h={22}>
            <path
              d="M2 0h20a2 2 0 0 1 2 2v12a2 2 0 0 1-2 2H11l-6 6v-6H2a2 2 0 0 1-2-2V2a2 2 0 0 1 2-2z"
              fill="#555"
            />
          </Icon>
          Comments
        </button>
        <button
          aria-label="Normal view"
          className="ml-[17px] flex h-full w-16 items-center justify-center bg-[#a6a6a6]"
        >
          <Icon w={26} h={24}>
            <path d="M1 0h24v24H1z" fill="#fff" />
            <path d="M7 2.500h16v14H7zM7 19h16v2H7z" fill="#a6a6a6" />
            <path d="M9.500 5h11v9h-11z" fill="#fff" />
            <path d="M11 7h8v4h-8z" fill="#fff" stroke="#a6a6a6" strokeWidth="1.500" />
          </Icon>
        </button>
        <div className="flex items-center gap-[37px] pl-[17px]">
          <button aria-label="Slide sorter">
            <Icon w={26} h={20}>
              <path d="M0 0h11v8H0zM15 0h11v8H15zM0 12h11v8H0zM15 12h11v8H15z" fill="#5c5c5c" />
            </Icon>
          </button>
          <button aria-label="Reading view">
            <Icon w={26} h={24}>
              <path
                d="M13 3.500C10 1 5 1 1 1.500V20c4-.500 9-.500 12 2 3-2.500 8-2.500 12-2V1.500C21 1 16 1 13 3.500zM13 3.500V22M4 6.500h6M4 10.500h6M4 14.500h6M16 6.500h6M16 10.500h6M16 14.500h6"
                stroke="#5c5c5c"
                strokeWidth="1.900"
              />
            </Icon>
          </button>
          <button aria-label="Slide show">
            <Icon w={26} h={22}>
              <path
                d="M0 1.500h26M3 2v12h20V2M8 8h10M13 14v6M8 21h10"
                stroke="#5c5c5c"
                strokeWidth="2.200"
              />
            </Icon>
          </button>
        </div>
        <button
          aria-label="Zoom out"
          onClick={() => setZoom(zoom - 1)}
          className="ml-[30px]"
        >
          <Icon w={16} h={16}>
            <path d="M1 8h14" stroke="#5c5c5c" strokeWidth="3.200" />
          </Icon>
        </button>
        <input
          type="range"
          aria-label="Zoom"
          value={zoom}
          onChange={(e) => setZoom(Number(e.target.value))}
          className="mx-3 h-7 w-[175px] appearance-none bg-transparent [&::-webkit-slider-runnable-track]:h-[7px] [&::-webkit-slider-runnable-track]:rounded-full [&::-webkit-slider-runnable-track]:bg-[#9b9b9b] [&::-webkit-slider-thumb]:-mt-[11px] [&::-webkit-slider-thumb]:size-7 [&::-webkit-slider-thumb]:appearance-none [&::-webkit-slider-thumb]:rounded-full [&::-webkit-slider-thumb]:bg-white [&::-webkit-slider-thumb]:shadow"
        />
        <button aria-label="Zoom in" onClick={() => setZoom(zoom + 1)}>
          <Icon w={16} h={16}>
            <path d="M1 8h14M8 1v14" stroke="#5c5c5c" strokeWidth="3" />
          </Icon>
        </button>
        <button className="ml-[29px] w-[54px] text-left">111%</button>
        <button aria-label="Fit slide to window" className="ml-[29px]">
          <Icon w={24} h={24}>
            <path d="M1 1h22v22H1z" stroke="#5c5c5c" strokeWidth="2" />
            <path
              d="M12 4v5M12 15v5M4 12h5M15 12h5M10 6l2-2 2 2M10 18l2 2 2-2M6 10l-2 2 2 2M18 10l2 2-2 2"
              stroke="#5c5c5c"
              strokeWidth="1.500"
            />
          </Icon>
        </button>
      </div>
    </footer>
  );
};

const App: React.FC = () => (
  <div className="flex min-h-screen flex-col bg-[#ececec] font-['Inter','Liberation_Sans',sans-serif]">
    <TitleBar />
    <Ribbon />
    <div className="flex flex-1">
      <div className="w-2 shrink-0 border-r-2 border-[#cacaca] bg-[#f8f8f8]" />
      <main className="flex min-w-0 flex-1 flex-col">
        <div className="grid flex-1 grid-cols-[28px_1fr] grid-rows-[28px_1fr]">
          <div className="border-b-2 border-r-2 border-[#dcdcdc] bg-[#ededed]" />
          <div className="h-7 min-w-0 overflow-visible">
            <HorizontalRuler />
          </div>
          <div className="min-h-0">
            <VerticalRuler />
          </div>
          <div className="flex items-center pb-[61px] pl-16 pr-[47px] pt-[78px]">
            <Slide />
          </div>
        </div>
        <div className="h-[76px] border-t-2 border-[#c9c9c9] pt-4">
          <textarea
            aria-label="Notes"
            rows={1}
            placeholder="Click to add notes"
            className="block w-full resize-none bg-transparent pl-[13px] font-['Liberation_Sans',Arial,sans-serif] text-[22px] leading-6 placeholder:text-black"
          />
        </div>
      </main>
      <FormatPanel />
    </div>
    <StatusBar />
  </div>
);

export default App;
